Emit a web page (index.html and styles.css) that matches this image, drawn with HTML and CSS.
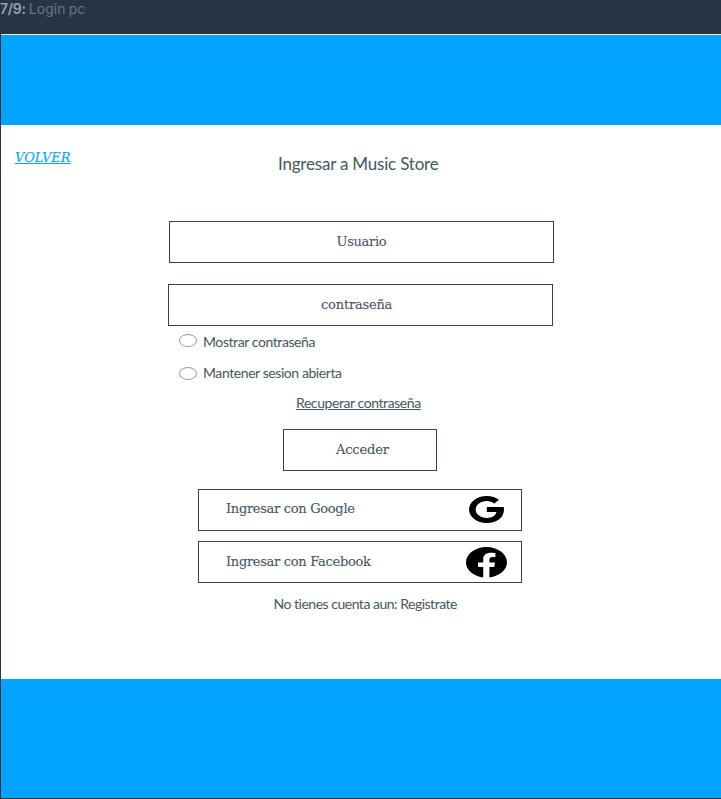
FILE: index.html
```
<!DOCTYPE html>
<html lang="es">
<head>
<meta charset="utf-8">
<title>Login pc</title>
<link rel="stylesheet" href="styles.css">
</head>
<body>
<header class="topbar"><b class="count">7/9:</b> <span class="name">Login pc</span></header>
<main class="screen">
  <div class="band band-top"></div>
  <section class="content">
    <div class="heading">
      <a class="back slab"><span>VOLVER</span></a>
      <h1 class="title"><span>Ingresar a Music Store</span></h1>
    </div>
    <form class="form">
      <div class="box field user slab"><span>Usuario</span></div>
      <div class="box field pass slab"><span>contraseña</span></div>
      <div class="option show"><i class="radio"></i><span>Mostrar contraseña</span></div>
      <div class="option keep"><i class="radio"></i><span>Mantener sesion abierta</span></div>
      <div class="recover"><span>Recuperar contraseña</span></div>
      <div class="box enter slab"><span>Acceder</span></div>
      <div class="box social google slab"><span>Ingresar con Google</span>
        <svg class="g-icon" viewBox="0 0 35 27" preserveAspectRatio="none"><path d="M30 3.8C26.8 1.4 22.7 0 17.8 0C8 0 0 6 0 13.5S8 27 17.8 27C28.2 27 35 21.4 35 13.6C35 12.6 34.9 11.8 34.7 11H17.8V16.1H27.5C26.6 19.9 23 22 17.8 22C11.6 22 6.7 18.4 6.7 13.5S11.6 5 17.8 5C20.8 5 23.3 5.9 25.2 7.4Z"/></svg>
      </div>
      <div class="box social facebook slab"><span>Ingresar con Facebook</span>
        <svg class="f-icon" viewBox="0 0 41 31" preserveAspectRatio="none"><path d="M41 15.5C41 6.9 31.8 0 20.5 0S0 6.9 0 15.5C0 22.8 7.1 28.9 17.2 30.5V20H12V15.5H17.2V12C17.2 8 20.4 5.8 25.2 5.8C27.5 5.8 29.4 6.1 29.4 6.1V10H26.8C24.2 10 23.4 11.2 23.4 12.5V15.5H29.1L28.2 20H23.4V30.5C33.5 28.9 41 22.8 41 15.5Z"/></svg>
      </div>
      <div class="register"><span>No tienes cuenta aun: Registrate</span></div>
    </form>
  </section>
  <div class="band band-bottom"></div>
</main>
</body>
</html>
```
FILE: styles.css
```
* { box-sizing: border-box; }
body {
  margin: 0;
  width: 721px;
  height: 799px;
  overflow: hidden;
  background: #fff;
  color: #485563;
  font: 14px/20px Lato, sans-serif;
  letter-spacing: -0.42px;
}
span { white-space: nowrap; }
.topbar {
  height: 34px;
  background: #283445;
  color: #64748b;
  font: 14px/18px Inter, sans-serif;
  letter-spacing: 0;
  word-spacing: -0.7px;
}
.count { color: #94a3b8; font-weight: 600; letter-spacing: -0.3px; }
.screen {
  height: 765px;
  display: flex;
  flex-direction: column;
  padding-top: 1px;
  border-left: 1px solid #283445;
  border-bottom: 1px solid #283445;
}
.band { background: #02a4ff; }
.band-top { height: 90px; }
.band-bottom { flex: 1; }
.content { height: 554px; }
.slab {
  font-family: "DejaVu Serif", serif;
  font-size: 13px;
  letter-spacing: -0.3px;
  -webkit-text-stroke: 0.1px currentColor;
}
.heading { display: flex; height: 96px; padding: 22px 0 0 14px; }
.back {
  width: 263px;
  padding-top: 1px;
  color: #02a4ff;
  font-style: italic;
  letter-spacing: 0;
  text-decoration: underline;
}
.title {
  margin: 7px 0 0;
  font-size: 17px;
  line-height: 20px;
  font-weight: 400;
  letter-spacing: -0.2px;
}
.form { display: flex; flex-direction: column; align-items: flex-start; }
.box {
  display: flex;
  height: 42px;
  border: 1px solid #344150;
  line-height: 40px;
}
.field { width: 385px; }
.user { margin-left: 168px; padding-left: 166.5px; }
.pass { margin: 21px 0 0 166.5px; padding-left: 152.5px; letter-spacing: -0.2px; }
.option { display: flex; height: 20px; margin-left: 178px; line-height: 18px; }
.show { margin-top: 7px; }
.keep { margin-top: 11px; }
.radio {
  width: 18px;
  height: 13px;
  margin: 1px 6px 0 0;
  border: 1px solid #8b9bb0;
  border-radius: 50%;
}
.keep .radio { margin: 3px 6px 0 0; }
.recover { height: 20px; margin: 9px 0 0 295px; text-decoration: underline; }
.enter { width: 154px; margin: 16px 0 0 282px; padding-left: 52px; letter-spacing: -0.15px; }
.social { width: 324px; margin-left: 197px; padding-left: 27px; line-height: 38px; }
.google { margin-top: 18px; }
.facebook { margin-top: 10px; }
.facebook span { padding-top: 1px; }
.social svg { display: block; margin-left: auto; }
.g-icon { width: 35px; height: 27px; margin-top: 6px; margin-right: 17px; }
.f-icon { width: 41px; height: 31px; margin-top: 5px; margin-right: 14px; }
.register { height: 20px; margin: 11px 0 0 272.5px; letter-spacing: -0.49px; }
```
